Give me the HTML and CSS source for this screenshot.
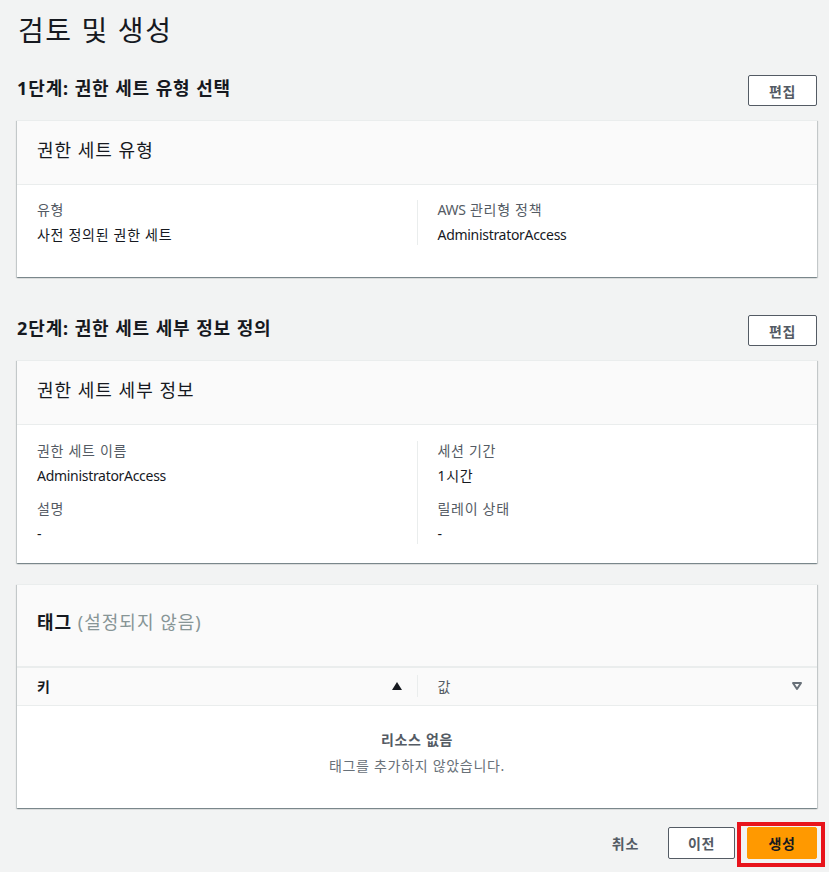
FILE: index.html
```html
<!DOCTYPE html>
<html lang="ko">
<head>
<meta charset="utf-8">
<link rel="stylesheet" href="styles.css">
</head>
<body>
<div class="page">
  <h1 class="title">검토 및 생성</h1>

  <div class="step">
    <h2 class="step-title">1단계: 권한 세트 유형 선택</h2>
    <button class="btn">편집</button>
  </div>
  <div class="card">
    <div class="card-header"><h3>권한 세트 유형</h3></div>
    <div class="card-body body-1">
      <div class="col">
        <div class="kv"><div class="label">유형</div><div class="value">사전 정의된 권한 세트</div></div>
      </div>
      <div class="col col-right">
        <div class="kv"><div class="label"><span class="en">AWS</span> 관리형 정책</div><div class="value en">AdministratorAccess</div></div>
      </div>
    </div>
  </div>

  <div class="step step2">
    <h2 class="step-title">2단계: 권한 세트 세부 정보 정의</h2>
    <button class="btn">편집</button>
  </div>
  <div class="card">
    <div class="card-header"><h3>권한 세트 세부 정보</h3></div>
    <div class="card-body body-2">
      <div class="col">
        <div class="kv"><div class="label">권한 세트 이름</div><div class="value en">AdministratorAccess</div></div>
        <div class="kv"><div class="label">설명</div><div class="value">-</div></div>
      </div>
      <div class="col col-right">
        <div class="kv"><div class="label">세션 기간</div><div class="value">1시간</div></div>
        <div class="kv"><div class="label">릴레이 상태</div><div class="value">-</div></div>
      </div>
    </div>
  </div>

  <div class="card card-tags">
    <div class="card-header tags-header"><h3><b>태그</b> <span class="muted">(설정되지 않음)</span></h3></div>
    <div class="thead">
      <div class="th th-key"><span>키</span>
        <svg class="sort" width="12" height="10" viewBox="0 0 12 10"><path d="M1 9 L6 1 L11 9 Z" fill="#16191f"/></svg>
      </div>
      <div class="th th-val"><span>값</span>
        <svg class="sort" width="12" height="10" viewBox="0 0 12 10"><path d="M2 2 L10 2 L6 8 Z" fill="none" stroke="#687078" stroke-width="2" stroke-linejoin="round"/></svg>
      </div>
    </div>
    <div class="empty">
      <div class="empty-title">리소스 없음</div>
      <div class="empty-text">태그를 추가하지 않았습니다.</div>
    </div>
  </div>

  <div class="footer">
    <button class="link-btn">취소</button>
    <button class="btn btn-prev">이전</button>
    <div class="highlight"><button class="btn btn-primary">생성</button></div>
  </div>
</div>
</body>
</html>
```
FILE: styles.css
```css
* { box-sizing: border-box; }
html, body { margin: 0; padding: 0; }
body {
  background: #f2f3f3;
  font-family: "Noto Sans", "Noto Sans CJK KR", sans-serif;
  font-size: 14px;
  color: #16191f;
  width: 829px;
  height: 872px;
  overflow: hidden;
  letter-spacing: 0.7px;
}
.en { letter-spacing: -0.3px; }
.page { padding: 0 12px 0 17px; }
.title {
  margin: 0;
  padding-top: 9px;
  font-size: 28px;
  font-weight: 400;
  line-height: 42px;
  letter-spacing: 1.6px;
  padding-left: 1px;
}
.step {
  display: flex;
  justify-content: space-between;
  align-items: center;
  margin-top: 24px;
  height: 31px;
  margin-bottom: 14px;
}
.step2 { margin-top: 38px; }
.step-title {
  margin: 0;
  font-size: 18px;
  font-weight: 700;
  line-height: 24px;
  letter-spacing: 0.9px;
  position: relative;
  top: -3px;
}
.btn {
  font-family: inherit;
  font-size: 14px;
  font-weight: 700;
  letter-spacing: 0.7px;
  color: #545b64;
  background: #fff;
  border: 1px solid #545b64;
  border-radius: 2px;
  height: 31px;
  width: 69px;
  padding: 0;
  cursor: pointer;
}
.card {
  background: #fff;
  border-top: 1px solid #eaeded;
  box-shadow: 0 1px 1px 0 rgba(0,28,36,.3), 1px 1px 1px 0 rgba(0,28,36,.15), -1px 1px 1px 0 rgba(0,28,36,.15);
}
.card-header {
  background: #fafafa;
  border-bottom: 1px solid #eaeded;
  height: 64px;
  display: flex;
  align-items: center;
  padding: 0 20px;
}
.card-header h3 {
  margin: 0;
  font-size: 18px;
  font-weight: 400;
  line-height: 24px;
  letter-spacing: 1px;
  position: relative;
  top: -3px;
}
.card-body { display: flex; }
.body-1 { padding: 15px 0 32px; }
.body-2 { padding: 16px 0 19px; }
.col {
  flex: 1;
  padding: 0 20px;
}
.col-right { border-left: 1px solid #eaeded; }
.kv + .kv { margin-top: 13px; }
.label { color: #545b64; line-height: 20px; margin-bottom: 5px; }
.value { line-height: 20px; }
.card-tags { margin-top: 21px; }
.tags-header { height: 82px; }
.tags-header h3 { top: -4px; }
.muted { color: #879596; }
.thead {
  display: flex;
  height: 39px;
  background: #fafafa;
  border-top: 1px solid #eaeded;
  border-bottom: 1px solid #eaeded;
  align-items: center;
}
.th {
  flex: 1;
  display: flex;
  justify-content: space-between;
  align-items: center;
  padding: 0 14px 0 20px;
  font-weight: 700;
  height: 22px;
  position: relative;
  top: -1px;
}
.th-val { border-left: 1px solid #eaeded; color: #545b64; }
.th-val span { font-weight: 400; }
.empty {
  text-align: center;
  padding: 23px 0 31px;
  color: #687078;
}
.empty-title { font-weight: 700; line-height: 22px; color: #545b64; }
.empty-text { line-height: 22px; margin-top: 4px; }
.footer {
  display: flex;
  justify-content: flex-end;
  align-items: center;
  margin-top: 14px;
  margin-right: -8px;
}
.link-btn {
  font-family: inherit;
  font-size: 14px;
  font-weight: 700;
  letter-spacing: 0.7px;
  color: #545b64;
  background: none;
  border: none;
  padding: 0;
  margin-right: 29px;
  position: relative;
  top: -2px;
}
.btn-prev { width: 67px; height: 32px; margin-bottom: 4px; }
.highlight {
  border: 4px solid #e8141c;
  padding: 1px 4px 4px 6px;
  margin-left: 2px;
  width: 88px;
  height: 45px;
}
.btn-primary {
  display: block;
  background: #ff9900;
  border-color: #ff9900;
  color: #16191f;
  width: 70px;
  height: 32px;
}
```
